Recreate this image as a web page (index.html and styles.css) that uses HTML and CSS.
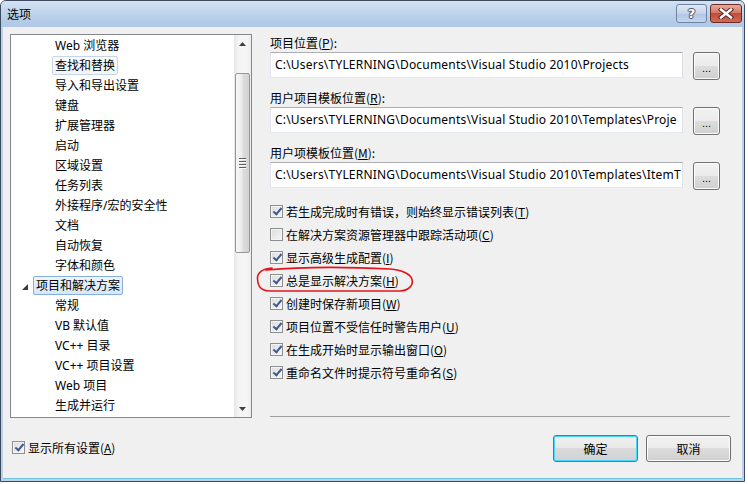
FILE: index.html
```html
<!DOCTYPE html>
<html lang="zh-CN">
<head>
<meta charset="utf-8">
<title>选项</title>
<link rel="stylesheet" href="styles.css">
</head>
<body>
<div class="window">
  <div class="titlebar">
    <span class="title">选项</span>
    <div class="caption-btns">
      <span class="cbtn help"><span class="help-glyph">?</span></span>
      <span class="cbtn close">
        <svg width="16" height="11" viewBox="0 0 16 11">
          <path d="M3 1.5 L13 9.5 M13 1.5 L3 9.5" stroke="#5a2a24" stroke-width="4.4" stroke-linecap="square"/>
          <path d="M3 1.5 L13 9.5 M13 1.5 L3 9.5" stroke="#fff" stroke-width="2.4" stroke-linecap="square"/>
        </svg>
      </span>
    </div>
  </div>
  <div class="client">
    <div class="main">
      <div class="listbox">
        <ul class="tree">
          <li class="item"><span class="lbl">Web 浏览器</span></li>
          <li class="item"><span class="lbl hot">查找和替换</span></li>
          <li class="item"><span class="lbl">导入和导出设置</span></li>
          <li class="item"><span class="lbl">键盘</span></li>
          <li class="item"><span class="lbl">扩展管理器</span></li>
          <li class="item"><span class="lbl">启动</span></li>
          <li class="item"><span class="lbl">区域设置</span></li>
          <li class="item"><span class="lbl">任务列表</span></li>
          <li class="item"><span class="lbl">外接程序/宏的安全性</span></li>
          <li class="item"><span class="lbl">文档</span></li>
          <li class="item"><span class="lbl">自动恢复</span></li>
          <li class="item"><span class="lbl">字体和颜色</span></li>
          <li class="item parent"><svg class="expander" width="6" height="6" viewBox="0 0 6 6"><polygon points="6,0 6,6 0,6" fill="#3a3a3a"/></svg><span class="lbl sel">项目和解决方案</span></li>
          <li class="item"><span class="lbl">常规</span></li>
          <li class="item"><span class="lbl">VB 默认值</span></li>
          <li class="item"><span class="lbl">VC++ 目录</span></li>
          <li class="item"><span class="lbl">VC++ 项目设置</span></li>
          <li class="item"><span class="lbl">Web 项目</span></li>
          <li class="item"><span class="lbl">生成并运行</span></li>
        </ul>
        <div class="vscroll">
          <div class="sb-arrow"><svg width="7" height="4" viewBox="0 0 7 4"><polygon points="3.5,0 7,4 0,4" fill="#404040"/></svg></div>
          <div class="sb-track">
            <div class="sb-thumb"><div class="grip"><i></i><i></i><i></i><i></i></div></div>
          </div>
          <div class="sb-arrow"><svg width="7" height="4" viewBox="0 0 7 4"><polygon points="0,0 7,0 3.5,4" fill="#404040"/></svg></div>
        </div>
      </div>
      <div class="panel">
        <div class="field">
          <div class="flabel">项目位置(<u>P</u>):</div>
          <div class="path-row">
            <div class="textbox">C:\Users\TYLERNING\Documents\Visual Studio 2010\Projects</div>
            <button class="btn browse">...</button>
          </div>
        </div>
        <div class="field">
          <div class="flabel">用户项目模板位置(<u>R</u>):</div>
          <div class="path-row">
            <div class="textbox">C:\Users\TYLERNING\Documents\Visual Studio 2010\Templates\Proje</div>
            <button class="btn browse">...</button>
          </div>
        </div>
        <div class="field">
          <div class="flabel">用户项模板位置(<u>M</u>):</div>
          <div class="path-row">
            <div class="textbox">C:\Users\TYLERNING\Documents\Visual Studio 2010\Templates\ItemT</div>
            <button class="btn browse">...</button>
          </div>
        </div>
        <div class="checks">
          <div class="chk"><span class="box on"></span><span>若生成完成时有错误，则始终显示错误列表(<u>T</u>)</span></div>
          <div class="chk"><span class="box"></span><span>在解决方案资源管理器中跟踪活动项(<u>C</u>)</span></div>
          <div class="chk"><span class="box on"></span><span>显示高级生成配置(<u>I</u>)</span></div>
          <div class="chk"><span class="box on"></span><span>总是显示解决方案(<u>H</u>)</span></div>
          <div class="chk"><span class="box on"></span><span>创建时保存新项目(<u>W</u>)</span></div>
          <div class="chk"><span class="box on"></span><span>项目位置不受信任时警告用户(<u>U</u>)</span></div>
          <div class="chk"><span class="box on"></span><span>在生成开始时显示输出窗口(<u>O</u>)</span></div>
          <div class="chk"><span class="box on"></span><span>重命名文件时提示符号重命名(<u>S</u>)</span></div>
        </div>
        <div class="separator"></div>
      </div>
    </div>
    <div class="footer">
      <div class="chk all"><span class="box on"></span><span>显示所有设置(<u>A</u>)</span></div>
      <div class="actions">
        <button class="btn dlg default">确定</button>
        <button class="btn dlg">取消</button>
      </div>
    </div>
  </div>
  <svg class="annotation" width="170" height="36" viewBox="0 0 170 36">
    <path d="M22 6 C12 7 7 10 7.5 17 C8 24 10 28.5 20 29 L150 29 C159 28.5 163.5 23 162 17.5 C160.5 12 152 8 140 7 C100 5 50 5 16 8" fill="none" stroke="#e4141b" stroke-width="1.6" stroke-linecap="round"/>
  </svg>
</div>
</body>
</html>
```

FILE: styles.css
```css
html, body {
  margin: 0;
  padding: 0;
  background: #ffffff;
}
body {
  font-family: "Noto Sans CJK SC", "Liberation Sans", sans-serif;
  font-size: 12px;
  color: #000;
}
.window {
  position: relative;
  width: 745px;
  height: 482px;
  box-sizing: border-box;
  border: 1px solid #3c4a5c;
  border-radius: 6px 6px 0 0;
  background: #bcd2ec;
  display: flex;
  flex-direction: column;
}
.titlebar {
  height: 26px;
  flex: none;
  display: flex;
  align-items: flex-start;
  justify-content: space-between;
  padding: 0 2px 0 6px;
  background: linear-gradient(#d3e2f3, #b9cfea 60%, #afc7e5);
  border-radius: 5px 5px 0 0;
}
.title {
  line-height: 26px;
  font-size: 12px;
  color: #000;
}
.caption-btns {
  display: flex;
  gap: 3px;
  margin-top: 3px;
}
.cbtn {
  height: 17px;
  width: 29px;
  border-radius: 3px;
  display: flex;
  align-items: center;
  justify-content: center;
}
.help {
  border: 1px solid #6f84a2;
  background: linear-gradient(#e0e9f5, #c3d4ea 50%, #afc5e2 51%, #c4d6ee);
}
.help-glyph {
  font-family: "DejaVu Sans", sans-serif;
  font-weight: bold;
  font-size: 13px;
  line-height: 13px;
  color: #fff;
  text-shadow: 0 0 1px #3d4f69, 0 0 1px #3d4f69, 1px 0 0 #4a5c76, -1px 0 0 #4a5c76, 0 1px 0 #4a5c76, 0 -1px 0 #4a5c76;
}
.close {
  width: 30px;
  border: 1px solid #6d2b22;
  background: linear-gradient(#e9a99b, #d47767 45%, #c24d3a 50%, #d06a54);
}
.client {
  flex: 1;
  margin: 0 2px 2px 2px;
  background: #f0f0f0;
  padding: 7px 11px 0 7px;
  display: flex;
  flex-direction: column;
  border-bottom: 1px solid #6fc7e0;
}
.main {
  display: flex;
  height: 384px;
}
.listbox {
  width: 242px;
  height: 384px;
  box-sizing: border-box;
  border: 1px solid #828790;
  background: #fff;
  display: flex;
}
.tree {
  list-style: none;
  margin: 0;
  padding: 0;
  flex: 1;
  overflow: hidden;
  font-family: "Noto Sans", "Noto Sans CJK SC", sans-serif;
}
.item {
  height: 20px;
  padding-left: 41px;
  display: flex;
  align-items: center;
  white-space: nowrap;
}
.item.parent {
  padding-left: 11px;
}
.expander {
  margin-right: 5px;
  margin-top: 3px;
}
.lbl {
  display: inline-block;
  height: 17px;
  line-height: 17px;
  padding: 0 2px;
  border: 1px solid transparent;
  border-radius: 2px;
  margin-top: 1px;
}
.lbl.hot {
  border-color: #c6d6ea;
  background: linear-gradient(#fbfcfe, #f1f5fb);
}
.lbl.sel {
  border-color: #86aedf;
  background: linear-gradient(#eef5fd, #d6e7fa);
}
.vscroll {
  width: 17px;
  flex: none;
  display: flex;
  flex-direction: column;
  background: linear-gradient(to right, #e6e6e6, #f4f4f4 25%, #f6f6f6 75%, #ececec);
}
.sb-arrow {
  height: 17px;
  display: flex;
  align-items: center;
  justify-content: center;
  flex: none;
}
.sb-track {
  flex: 1;
  padding: 21px 1px 0 1px;
}
.sb-thumb {
  height: 180px;
  box-sizing: border-box;
  border: 1px solid #979797;
  border-radius: 2px;
  background: linear-gradient(to right, #f6f6f6, #ececec 45%, #dcdcdc 55%, #d2d2d2);
  display: flex;
  align-items: center;
  justify-content: center;
}
.grip {
  display: flex;
  flex-direction: column;
  gap: 1px;
}
.grip i {
  display: block;
  width: 7px;
  height: 1px;
  background: #5f5f5f;
  border-bottom: 1px solid #fafafa;
}
.panel {
  width: 461px;
  margin-left: 18px;
  display: flex;
  flex-direction: column;
}
.field {
  margin-bottom: 9px;
}
.flabel {
  height: 18px;
  line-height: 18px;
}
.path-row {
  display: flex;
  align-items: flex-start;
  gap: 10px;
  height: 28px;
}
.textbox {
  width: 413px;
  height: 26px;
  box-sizing: border-box;
  border: 1px solid #abadb3;
  border-color: #abadb3 #dbdfe6 #e3e9ef #e2e3ea;
  background: #fff;
  padding-left: 4px;
  line-height: 23px;
  white-space: nowrap;
  overflow: hidden;
  font-family: "Noto Sans", "Liberation Sans", sans-serif;
  font-size: 12px;
  letter-spacing: 0.2px;
}
.btn {
  font-family: "Noto Sans CJK SC", "Liberation Sans", sans-serif;
  font-size: 12px;
  color: #000;
  box-sizing: border-box;
  border: 1px solid #707070;
  border-radius: 3px;
  background: linear-gradient(#f2f2f2, #ebebeb 49%, #dddddd 50%, #cfcfcf);
  box-shadow: inset 0 0 0 1px #fcfcfc;
  padding: 0;
  margin: 0;
}
.browse {
  width: 27px;
  height: 28px;
  line-height: 20px;
  padding-top: 4px;
  font-family: "Liberation Sans", sans-serif;
  font-size: 11px;
}
.checks {
  margin-top: 1px;
  display: flex;
  flex-direction: column;
}
.chk {
  height: 23px;
  display: flex;
  align-items: center;
  gap: 3px;
  white-space: nowrap;
}
.box {
  width: 13px;
  height: 13px;
  box-sizing: border-box;
  border: 1px solid #8e8f8f;
  background: linear-gradient(135deg, #dcdcdc, #f6f6f6);
  box-shadow: inset 0 0 0 1px #f4f4f4;
  flex: none;
  position: relative;
}
.box.on::after {
  content: "";
  position: absolute;
  left: 3px;
  top: 0px;
  width: 3px;
  height: 7px;
  border: solid #3f5a92;
  border-width: 0 2px 2px 0;
  transform: rotate(40deg);
  transform-origin: 50% 50%;
  margin-left: 0.5px;
}
.separator {
  margin-top: auto;
  height: 1px;
  background: #a0a0a0;
  margin-bottom: 1px;
  width: 460px;
}
.footer {
  display: flex;
  justify-content: space-between;
  align-items: center;
  margin-top: 17px;
  height: 27px;
}
.chk.all {
  margin-left: 2px;
  margin-top: -2px;
}
.actions {
  display: flex;
  gap: 8px;
}
.dlg {
  width: 85px;
  height: 27px;
  line-height: 24px;
}
.dlg.default {
  border-color: #3c7fb1;
  box-shadow: inset 0 0 0 1px #48d8fd;
  background: linear-gradient(#f0f0f0, #e9e9e9 49%, #dadada 50%, #cfd1d3);
}
.annotation {
  position: absolute;
  left: 249px;
  top: 261px;
}
```
